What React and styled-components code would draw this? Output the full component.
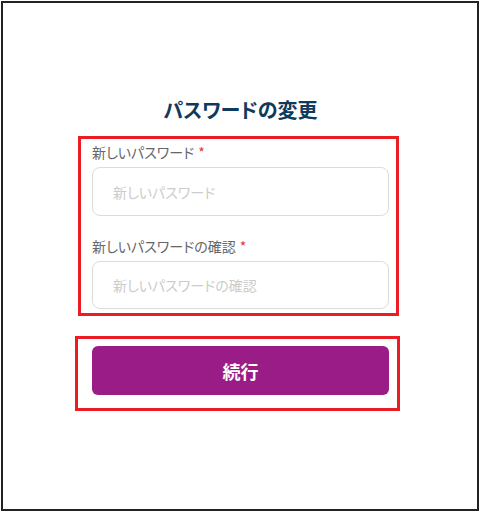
import React from "react";
import styled, { createGlobalStyle } from "styled-components";

const GlobalStyle = createGlobalStyle`
  html, body {
    margin: 0;
    padding: 0;
    background: #ffffff;
  }
  body {
    font-family: "Noto Sans CJK JP", "Noto Sans", sans-serif;
  }
`;

const Frame = styled.div`
  box-sizing: border-box;
  width: 478px;
  height: 510px;
  margin: 1px;
  border: 2px solid #222222;
  padding-top: 93px;
`;

const Column = styled.div`
  width: 297px;
  margin: 0 0 0 89px;
  display: flex;
  flex-direction: column;
`;

const Title = styled.h1`
  margin: 0 0 12px;
  font-size: 20px;
  line-height: 28px;
  font-weight: 700;
  text-align: center;
  color: #0f3a5c;
  font-feature-settings: "palt";
`;

const Highlight = styled.div`
  border: 3px solid #ec1c24;
  margin: ${(p) => p.$margin};
  padding: ${(p) => p.$padding};
  display: flex;
  flex-direction: column;
`;

const Field = styled.div`
  display: flex;
  flex-direction: column;
  margin-top: ${(p) => (p.$first ? "0" : "20px")};
`;

const Label = styled.label`
  font-size: 14px;
  line-height: 20px;
  color: #666666;
  margin-bottom: 5px;
  font-feature-settings: "palt";
`;

const Required = styled.span`
  color: #e8313a;
  margin-left: 4px;
`;

const Input = styled.input`
  box-sizing: border-box;
  width: 100%;
  height: ${(p) => p.$h}px;
  border: 1px solid #dcdcdc;
  border-radius: 8px;
  padding: 0 20px;
  font-family: inherit;
  font-size: 14px;
  color: #333333;
  outline: none;
  font-feature-settings: "palt";
  &::placeholder {
    color: #cccccc;
  }
`;

const Button = styled.button`
  box-sizing: border-box;
  width: 100%;
  height: 49px;
  border: none;
  border-radius: 6px;
  background: #9a1c86;
  color: #ffffff;
  font-family: inherit;
  font-size: 18px;
  font-weight: 700;
  cursor: pointer;
`;

export default function App() {
  return (
    <>
      <GlobalStyle />
      <Frame>
        <Column>
          <Title>パスワードの変更</Title>
          <Highlight $margin="0 -10px 0 -14px" $padding="3px 7px 4px 11px">
            <Field $first>
              <Label>
                新しいパスワード<Required>*</Required>
              </Label>
              <Input type="password" placeholder="新しいパスワード" $h={49} />
            </Field>
            <Field>
              <Label>
                新しいパスワードの確認<Required>*</Required>
              </Label>
              <Input type="password" placeholder="新しいパスワードの確認" $h={48} />
            </Field>
          </Highlight>
          <Highlight $margin="20px -11px 0 -17px" $padding="7px 8px 13px 14px">
            <Button>続行</Button>
          </Highlight>
        </Column>
      </Frame>
    </>
  );
}
